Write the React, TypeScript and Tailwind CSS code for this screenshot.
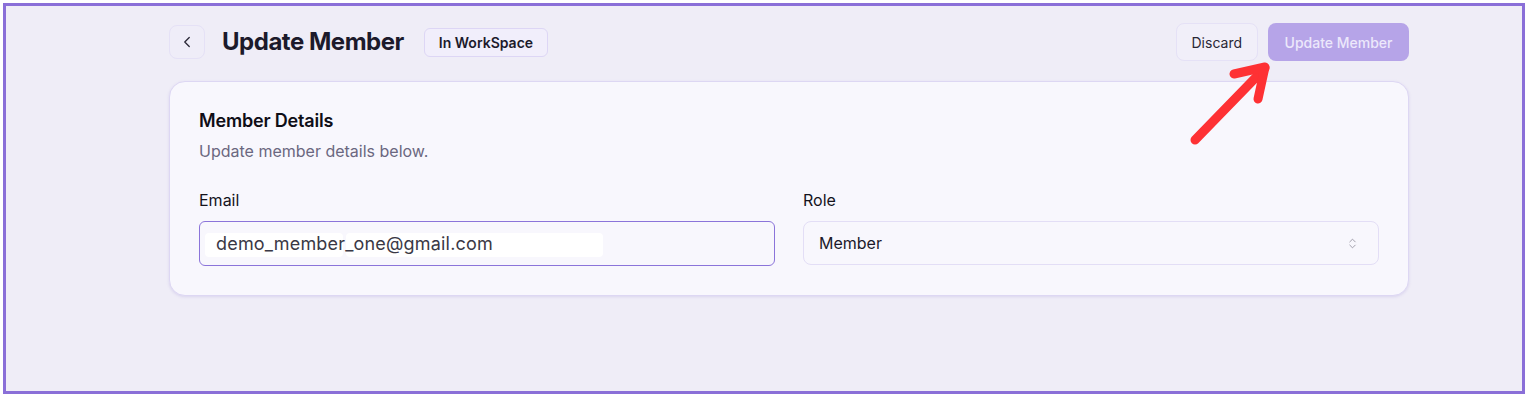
import React from 'react';
import { ChevronLeft, ChevronsUpDown } from 'lucide-react';

export default function App() {
  return (
    <div className="w-[1528px] h-[397px] bg-white p-[3px] font-['Inter',sans-serif]">
      <div className="relative h-[391px] w-[1522px] border-[3px] border-[#8a6fd8] bg-[#efedf7]">
        <div className="ml-[163px] w-[1240px] pt-[17px]">
          {/* Header */}
          <div className="flex h-[38px] items-center justify-between">
            <div className="flex items-center">
              <button className="flex h-[34px] w-[36px] items-center justify-center rounded-lg border border-[#e5e1f6] bg-[#efedf8] text-[#2a2736]">
                <ChevronLeft className="h-[18px] w-[18px]" strokeWidth={1.75} />
              </button>
              <h1 className="ml-[17px] text-[24px] font-bold tracking-[-0.02em] text-[#1c1a2b]">Update Member</h1>
              <span className="ml-[20px] rounded-md border border-[#ddd6f5] bg-[#f1eefb] px-[14px] py-[3px] text-[14px] font-semibold text-[#1c1a2b]">
                In WorkSpace
              </span>
            </div>
            <div className="flex items-center gap-[10px]">
              <button className="h-[38px] rounded-lg border border-[#e5e1f6] bg-[#f1eff9] px-[15px] text-[14px] text-[#2a2736]">
                Discard
              </button>
              <button className="h-[38px] w-[141px] rounded-lg bg-[#b6a4e8] text-[14px] font-medium text-[#ece8fb]">
                Update Member
              </button>
            </div>
          </div>

          {/* Card */}
          <div className="mt-[20px] h-[215px] rounded-2xl border border-[#ddd7f3] bg-[#f8f7fd] px-[29px] pt-[26px] shadow-[0_1px_3px_rgba(120,100,200,0.18)]">
            <h2 className="text-[18px] font-semibold leading-[26px] tracking-[-0.01em] text-[#0f0e17]">Member Details</h2>
            <p className="mt-[6px] text-[16px] leading-[22px] text-[#6b6780]">Update member details below.</p>
            <div className="mt-[27px] grid grid-cols-2 gap-[28px]">
              <div>
                <label className="block text-[16px] leading-[22px] text-[#14131c]">Email</label>
                <div className="relative mt-[10px] flex h-[45px] items-center rounded-md border border-[#8b74da] bg-[#f8f7fd] px-[16px]">
                  <div className="absolute left-[5px] top-[11px] h-[24px] w-[138px] rounded-[4px] bg-white" />
                  <div className="absolute left-[146px] top-[11px] h-[24px] w-[257px] rounded-[4px] bg-white" />
                  <span className="relative text-[18px] tracking-[0.01em] text-[#3a3845]">demo_member_one@gmail.com</span>
                </div>
              </div>
              <div>
                <label className="block text-[16px] leading-[22px] text-[#14131c]">Role</label>
                <div className="mt-[10px] flex h-[44px] items-center justify-between rounded-lg border border-[#e3def6] bg-[#f8f7fd] px-[15px]">
                  <span className="text-[16px] text-[#1c1a2b]">Member</span>
                  <ChevronsUpDown className="mr-[4px] h-[13px] w-[13px] text-[#8d8a99]" strokeWidth={1.5} />
                </div>
              </div>
            </div>
          </div>
        </div>

        {/* Red arrow annotation */}
        <svg className="absolute left-[1175px] top-[47px]" width="100" height="100" viewBox="0 0 100 100" fill="none">
          <g stroke="#fe3134" strokeWidth="9" strokeLinecap="round" strokeLinejoin="round">
            <line x1="14" y1="87" x2="84" y2="15" />
            <polyline points="53,21 84,14 77,46" />
          </g>
        </svg>
      </div>
    </div>
  );
}
